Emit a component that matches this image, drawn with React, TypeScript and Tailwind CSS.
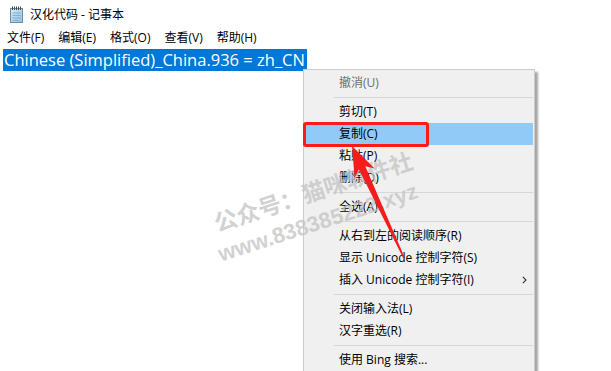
import React from "react";

const font = { fontFamily: '"Open Sans", "Noto Sans CJK SC", sans-serif' };

function NotepadIcon() {
  return (
    <svg width="15" height="17" viewBox="0 0 15 17">
      <defs>
        <linearGradient id="np" x1="0" y1="0" x2="1" y2="1">
          <stop offset="0" stopColor="#d6ecfa" />
          <stop offset="1" stopColor="#8fbfe3" />
        </linearGradient>
      </defs>
      <rect x="1.5" y="2.5" width="12" height="14" fill="url(#np)" stroke="#6f8fa8" strokeWidth="1" />
      <line x1="3.5" y1="7" x2="11.5" y2="7" stroke="#7aa6c7" strokeWidth="0.8" />
      <line x1="3.5" y1="9.5" x2="11.5" y2="9.5" stroke="#7aa6c7" strokeWidth="0.8" />
      <line x1="3.5" y1="12" x2="11.5" y2="12" stroke="#7aa6c7" strokeWidth="0.8" />
      <line x1="3.5" y1="14.5" x2="9.5" y2="14.5" stroke="#7aa6c7" strokeWidth="0.8" />
      {[3, 5, 7, 9, 11].map((x) => (
        <rect key={x} x={x} y="0.5" width="1" height="3.5" fill="#4a4a4a" />
      ))}
    </svg>
  );
}

type Item = { label: string; disabled?: boolean; active?: boolean; sub?: boolean } | "sep";

const items: Item[] = [
  { label: "撤消(U)", disabled: true },
  "sep",
  { label: "剪切(T)" },
  { label: "复制(C)", active: true },
  { label: "粘贴(P)" },
  { label: "删除(D)" },
  "sep",
  { label: "全选(A)" },
  "sep",
  { label: "从右到左的阅读顺序(R)" },
  { label: "显示 Unicode 控制字符(S)" },
  { label: "插入 Unicode 控制字符(I)", sub: true },
  "sep",
  { label: "关闭输入法(L)" },
  { label: "汉字重选(R)" },
  "sep",
  { label: "使用 Bing 搜索..." },
];

export default function App() {
  return (
    <div className="relative w-[611px] h-[371px] overflow-hidden bg-white text-black" style={font}>
      {/* Title bar */}
      <div className="flex items-center h-[29px] pl-[9px] gap-[6px]">
        <NotepadIcon />
        <span className="text-[12px] leading-none">汉化代码 - 记事本</span>
      </div>
      {/* Menu bar */}
      <div className="flex items-center h-[18px] text-[12px]">
        {["文件(F)", "编辑(E)", "格式(O)", "查看(V)", "帮助(H)"].map((m) => (
          <span key={m} className="px-[7px] leading-none">
            {m}
          </span>
        ))}
      </div>
      {/* Edit area */}
      <div className="pt-px pl-[3px]">
        <span
          className="inline-block bg-[#0078d7] text-white text-[16.5px] leading-[22px] h-[22px] pl-px pr-[2px] whitespace-pre"
          style={font}
        >
          Chinese (Simplified)_China.936 = zh_CN
        </span>
      </div>

      {/* Context menu */}
      <div className="absolute left-[303px] top-[69px] w-[232px] bg-[#f0f0f0] border border-[#cccccc] shadow-[3px_3px_2px_rgba(0,0,0,0.35)] pt-[2px] px-px text-[12px]">
        {items.map((it, i) =>
          it === "sep" ? (
            <div key={i} className="h-[7px] flex items-center pl-[29px]">
              <div className="h-px w-full bg-[#d7d7d7]" />
            </div>
          ) : (
            <div
              key={i}
              className={
                "relative h-[22px] flex items-center pl-[34px] whitespace-pre " +
                (it.active ? "bg-[#91c9f7] " : "") +
                (it.disabled ? "text-[#6d6d6d]" : "text-black")
              }
            >
              {it.label}
              {it.sub && (
                <svg className="absolute left-[217px] top-[7px]" width="5" height="8" viewBox="0 0 5 8">
                  <path d="M0.8 0.8 L4 4 L0.8 7.2" fill="none" stroke="#333" strokeWidth="1.1" />
                </svg>
              )}
            </div>
          )
        )}
      </div>

      {/* Red highlight box */}
      <div className="absolute left-[303px] top-[122px] w-[126px] h-[25px] border-[3px] border-[#ff1a1a] rounded-[3px]" />

      {/* Watermark */}
      <div
        className="absolute left-[313px] top-[191px] -translate-x-1/2 -translate-y-1/2 rotate-[-18deg] whitespace-nowrap text-[23px] font-bold leading-none text-[rgba(195,195,195,0.75)]"
        style={{ fontFamily: '"Noto Sans CJK SC", sans-serif' }}
      >
        公众号：猫咪软件社
      </div>
      <div
        className="absolute left-[318px] top-[223px] -translate-x-1/2 -translate-y-1/2 rotate-[-18deg] whitespace-nowrap text-[22px] font-bold leading-none text-[rgba(195,195,195,0.75)]"
        style={{ fontFamily: '"Liberation Sans", sans-serif' }}
      >
        www.838385222.xyz
      </div>

      {/* Red arrow */}
      <svg className="absolute left-0 top-0" width="611" height="371" viewBox="0 0 611 371">
        <polygon
          points="352,146 374.6,168.6 365.3,166.3 404.7,257.7 403.3,258.3 358.9,169.2 354.6,177.8"
          fill="#f51c1c"
        />
      </svg>
    </div>
  );
}
